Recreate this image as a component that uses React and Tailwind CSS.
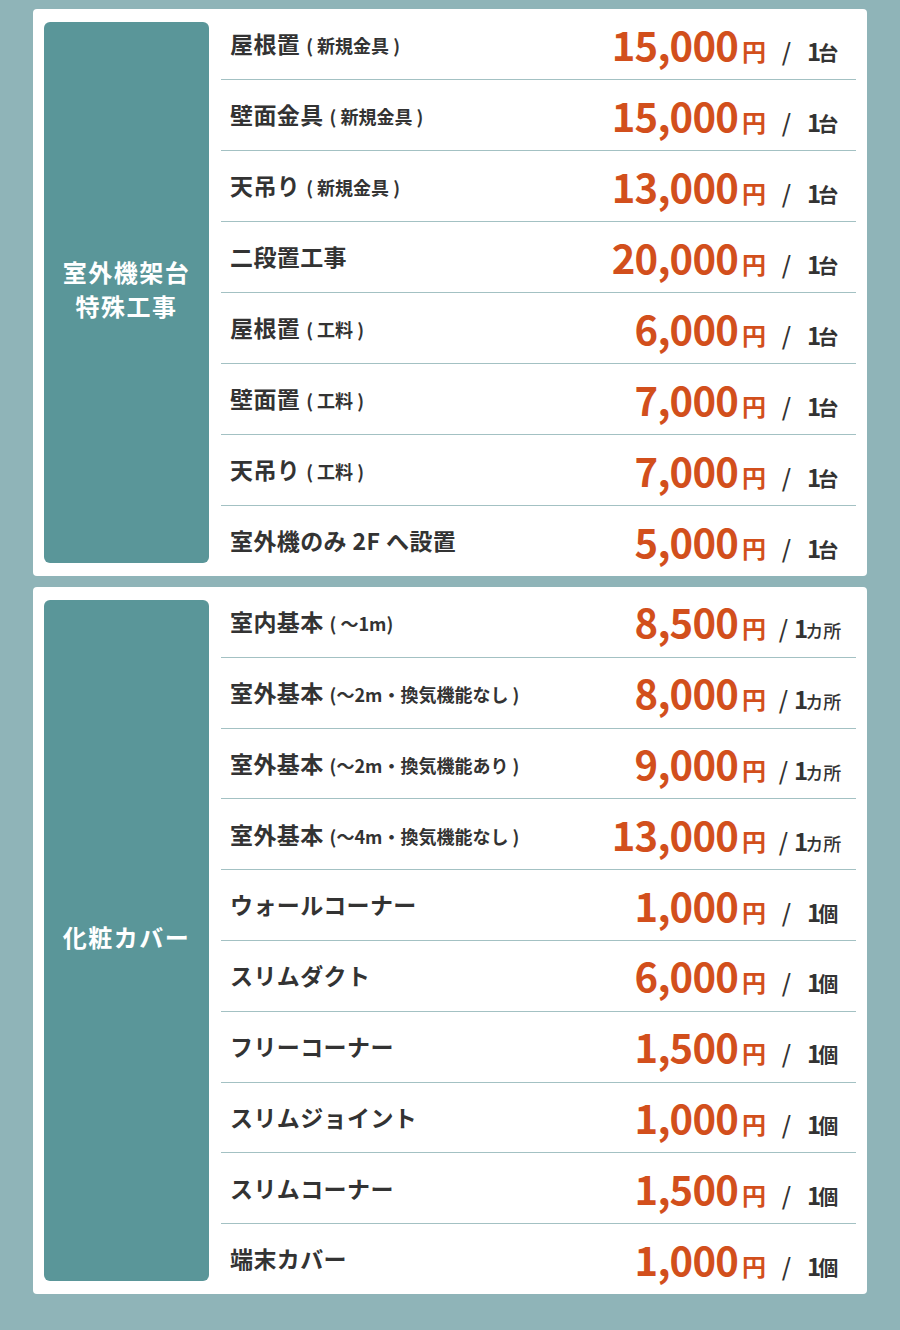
import React from 'react';

const font = { fontFamily: '"Noto Sans CJK JP", "Noto Sans", sans-serif' };

const stands = [
    { name: '屋根置', note: '( 新規金具 )', price: '15,000', unit: '1台' },
    { name: '壁面金具', note: '( 新規金具 )', price: '15,000', unit: '1台' },
    { name: '天吊り', note: '( 新規金具 )', price: '13,000', unit: '1台' },
    { name: '二段置工事', note: '', price: '20,000', unit: '1台' },
    { name: '屋根置', note: '( 工料 )', price: '6,000', unit: '1台' },
    { name: '壁面置', note: '( 工料 )', price: '7,000', unit: '1台' },
    { name: '天吊り', note: '( 工料 )', price: '7,000', unit: '1台' },
    { name: '室外機のみ 2F へ設置', note: '', price: '5,000', unit: '1台' },
];

const covers = [
    { name: '室内基本', note: '( ～1m)', price: '8,500', unit: '1カ所' },
    { name: '室外基本', note: '(～2m・換気機能なし )', price: '8,000', unit: '1カ所' },
    { name: '室外基本', note: '(～2m・換気機能あり )', price: '9,000', unit: '1カ所' },
    { name: '室外基本', note: '(～4m・換気機能なし )', price: '13,000', unit: '1カ所' },
    { name: 'ウォールコーナー', note: '', price: '1,000', unit: '1個' },
    { name: 'スリムダクト', note: '', price: '6,000', unit: '1個' },
    { name: 'フリーコーナー', note: '', price: '1,500', unit: '1個' },
    { name: 'スリムジョイント', note: '', price: '1,000', unit: '1個' },
    { name: 'スリムコーナー', note: '', price: '1,500', unit: '1個' },
    { name: '端末カバー', note: '', price: '1,000', unit: '1個' },
];

function Unit({ unit }) {
    const n = unit.slice(0, 1);
    const rest = unit.slice(1);
    const wide = rest.length > 1;
    return (
        <div className="w-[90px] flex items-baseline justify-center text-[#333] pr-[2px]">
            <span className={`text-[24px] font-medium ${wide ? 'mr-[6px]' : 'mr-[16px]'}`}>/</span>
            <span className="text-[24px] font-bold tracking-[-3px]">{n}</span>
            <span className={`${wide ? 'text-[18px] font-medium' : 'text-[20px] font-bold'}`}>{rest}</span>
        </div>
    );
}

function Row({ item, last }) {
    return (
        <div className={`flex-1 flex items-center justify-between pl-[9px] ${last ? '' : 'border-b border-[#a3c1c3]'}`}>
            <div className="text-[#333] font-bold text-[23px] tracking-[0.4px] pb-[1px]">
                {item.name}
                {item.note && <span className="text-[18px] ml-[6px] tracking-normal">{item.note}</span>}
            </div>
            <div className="flex items-baseline pt-[4px]">
                <span className="text-[40px] font-bold leading-none text-[#d24f1c] tracking-[-0.8px]">{item.price}</span>
                <span className="text-[24px] font-bold leading-none text-[#d24f1c] ml-[4px]">円</span>
                <Unit unit={item.unit} />
            </div>
        </div>
    );
}

function Section({ title, items, height }) {
    return (
        <div className={`bg-white rounded-[4px] flex ${height}`}>
            <div className="w-[165px] my-[13px] ml-[11px] bg-[#5a9699] rounded-[6px] flex items-center justify-center">
                <h2 className="text-white font-bold text-[24px] tracking-[1.5px] leading-[34px] text-center pb-[8px]">
                    {title.map((t) => <div key={t}>{t}</div>)}
                </h2>
            </div>
            <div className="flex-1 flex flex-col ml-[12px] mr-[11px]">
                {items.map((item, i) => (
                    <Row key={i} item={item} last={i === items.length - 1} />
                ))}
            </div>
        </div>
    );
}

export default function App() {
    return (
        <div className="w-[900px] h-[1330px] bg-[#8fb4b8] pt-[9px] px-[33px]" style={font}>
            <div className="flex flex-col gap-[11px]">
                <Section title={['室外機架台', '特殊工事']} items={stands} height="h-[567px]" />
                <Section title={['化粧カバー']} items={covers} height="h-[707px]" />
            </div>
        </div>
    );
}
